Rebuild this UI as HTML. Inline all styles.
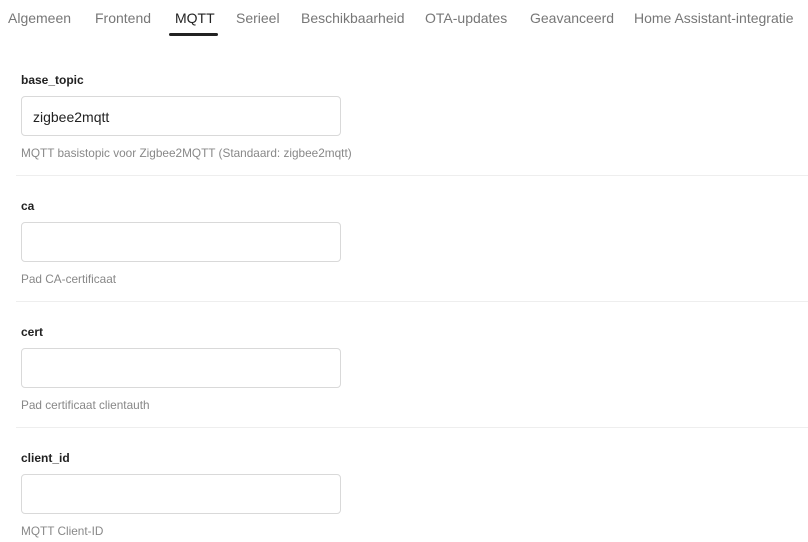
<!DOCTYPE html>
<html><head><style>
body{margin:0;width:808px;height:542px;background:#fff;font-family:"Liberation Sans",sans-serif;overflow:hidden;position:relative}
.tab{position:absolute;top:10px;font-size:14px;color:#777;white-space:nowrap}
.tab.a{color:#222}
.ul{position:absolute;left:169px;top:33px;width:49px;height:3px;background:#222;border-radius:2px}
.lab{position:absolute;left:21px;font-size:12px;font-weight:bold;color:#222}
.inp{position:absolute;left:21px;width:318px;height:38px;border:1px solid #d9d9d9;border-radius:4px;box-sizing:content-box}
.inp span{position:absolute;left:11px;top:12px;font-size:14px;color:#222}
.help{position:absolute;left:21px;font-size:11.8px;color:#888}
.div{position:absolute;left:16px;right:0;height:1px;background:#eee}
</style></head><body>
<div class="tab" style="left:8px">Algemeen</div>
<div class="tab" style="left:95px">Frontend</div>
<div class="tab a" style="left:175px">MQTT</div>
<div class="tab" style="left:236px">Serieel</div>
<div class="tab" style="left:301px">Beschikbaarheid</div>
<div class="tab" style="left:425px">OTA-updates</div>
<div class="tab" style="left:530px">Geavanceerd</div>
<div class="tab" style="left:634px">Home Assistant-integratie</div>
<div class="ul"></div>

<div class="lab" style="top:73px">base_topic</div>
<div class="inp" style="top:96px"><span>zigbee2mqtt</span></div>
<div class="help" style="top:146px">MQTT basistopic voor Zigbee2MQTT (Standaard: zigbee2mqtt)</div>
<div class="div" style="top:175px"></div>

<div class="lab" style="top:199px">ca</div>
<div class="inp" style="top:222px"></div>
<div class="help" style="top:272px">Pad CA-certificaat</div>
<div class="div" style="top:301px"></div>

<div class="lab" style="top:325px">cert</div>
<div class="inp" style="top:348px"></div>
<div class="help" style="top:398px">Pad certificaat clientauth</div>
<div class="div" style="top:427px"></div>

<div class="lab" style="top:451px">client_id</div>
<div class="inp" style="top:474px"></div>
<div class="help" style="top:524px">MQTT Client-ID</div>
</body></html>
